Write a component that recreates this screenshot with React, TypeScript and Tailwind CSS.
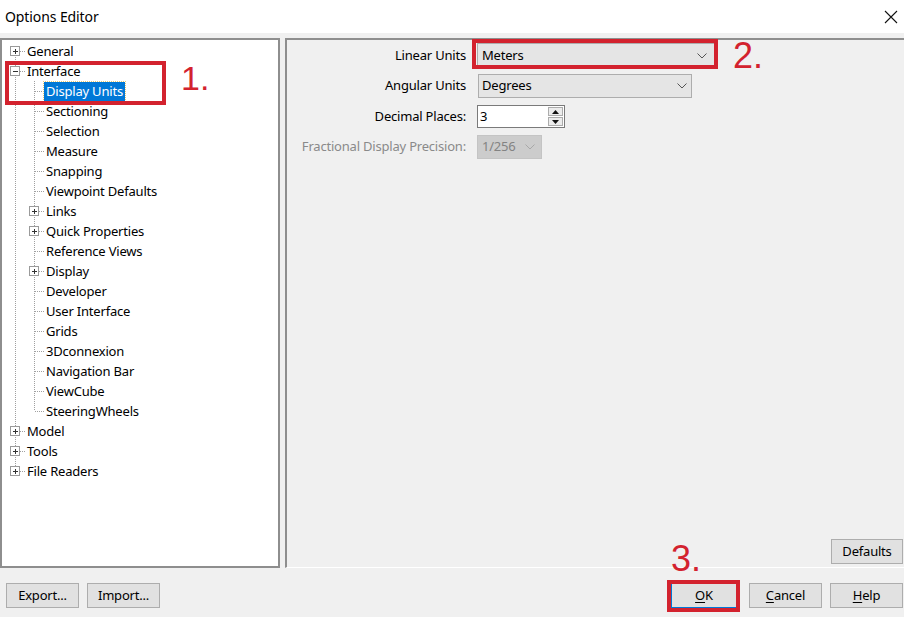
import React from "react";

type Item = { label: string; level: 0 | 1; expander?: "plus" | "minus"; first?: boolean; last?: boolean; lastChild?: boolean; selected?: boolean };

const items: Item[] = [
  { label: "General", level: 0, expander: "plus", first: true },
  { label: "Interface", level: 0, expander: "minus" },
  { label: "Display Units", level: 1, selected: true },
  { label: "Sectioning", level: 1 },
  { label: "Selection", level: 1 },
  { label: "Measure", level: 1 },
  { label: "Snapping", level: 1 },
  { label: "Viewpoint Defaults", level: 1 },
  { label: "Links", level: 1, expander: "plus" },
  { label: "Quick Properties", level: 1, expander: "plus" },
  { label: "Reference Views", level: 1 },
  { label: "Display", level: 1, expander: "plus" },
  { label: "Developer", level: 1 },
  { label: "User Interface", level: 1 },
  { label: "Grids", level: 1 },
  { label: "3Dconnexion", level: 1 },
  { label: "Navigation Bar", level: 1 },
  { label: "ViewCube", level: 1 },
  { label: "SteeringWheels", level: 1, lastChild: true },
  { label: "Model", level: 0, expander: "plus" },
  { label: "Tools", level: 0, expander: "plus" },
  { label: "File Readers", level: 0, expander: "plus", last: true },
];

const DOT = "#a0a0a0";

function Box({ cx, kind }: { cx: number; kind: "plus" | "minus" }) {
  return (
    <g>
      <rect x={cx - 4.5} y={5.5} width={9} height={9} fill="#fff" stroke="#9a9a9a" />
      <line x1={cx - 2} y1={10} x2={cx + 3} y2={10} stroke="#333" strokeWidth={1} />
      {kind === "plus" && <line x1={cx + 0.5} y1={7.5} x2={cx + 0.5} y2={12.5} stroke="#333" strokeWidth={1} />}
    </g>
  );
}

function Gutter({ it }: { it: Item }) {
  const w = it.level === 0 ? 23 : 42;
  const x0 = 13.5;
  const x1 = 32.5;
  return (
    <svg width={w} height={20} className="shrink-0" shapeRendering="crispEdges">
      <line x1={x0} x2={x0} y1={it.first ? 10 : 0} y2={it.last ? 10 : 20} stroke={DOT} strokeDasharray="1 1" />
      {it.level === 0 && (
        <>
          <line x1={18} x2={23} y1={10.5} y2={10.5} stroke={DOT} strokeDasharray="1 1" />
          {it.expander && <Box cx={13} kind={it.expander} />}
        </>
      )}
      {it.level === 1 && (
        <>
          <line x1={x1} x2={x1} y1={0} y2={it.lastChild ? 10 : 20} stroke={DOT} strokeDasharray="1 1" />
          <line x1={it.expander ? 37 : 33} x2={42} y1={10.5} y2={10.5} stroke={DOT} strokeDasharray="1 1" />
          {it.expander && <Box cx={32} kind={it.expander} />}
        </>
      )}
    </svg>
  );
}

function Chevron({ color = "#555" }: { color?: string }) {
  return (
    <svg width="10" height="6" viewBox="0 0 10 6" className="shrink-0">
      <path d="M0.5 0.5 L5 5 L9.5 0.5" fill="none" stroke={color} strokeWidth="1" />
    </svg>
  );
}

function Btn({ children, w = "w-[73px]", border = "border-[#adadad]", className = "" }: { children: React.ReactNode; w?: string; border?: string; className?: string }) {
  return (
    <div
      className={`h-[25px] ${w} flex items-center justify-center bg-[#e1e1e1] border ${border} text-[13px] tracking-[-0.2px] text-black ${className}`}
    >
      {children}
    </div>
  );
}

const T = "text-[13px] tracking-[-0.2px]";

export default function App() {
  return (
    <div
      className="relative w-[904px] h-[617px] flex flex-col bg-[#f0f0f0] overflow-hidden text-black"
      style={{ fontFamily: '"Noto Sans", "Open Sans", sans-serif' }}
    >
      {/* Title bar */}
      <div className="h-[33px] bg-white flex items-center justify-between pl-[5px] pr-[6px] shrink-0">
        <span className="text-[14px] tracking-[-0.1px] leading-none">Options Editor</span>
        <svg width="14" height="14" viewBox="0 0 14 14">
          <path d="M1 1 L13 13 M13 1 L1 13" stroke="#111" strokeWidth="1.1" />
        </svg>
      </div>

      {/* Main area */}
      <div className="flex pt-[5px] h-[535px] shrink-0">
        {/* Tree */}
        <div className="w-[280px] h-[530px] bg-white border-2 border-[#8e8e8e] pt-[1px] shrink-0 overflow-hidden">
          {items.map((it) => (
            <div key={it.label} className="h-[20px] flex items-center">
              <Gutter it={it} />
              <span
                className={`${T} leading-[19px] h-[19px] px-[2px] whitespace-nowrap ${
                  it.selected ? "bg-[#0078d7] text-white outline outline-1 outline-dotted outline-[#e8c872]" : ""
                }`}
              >
                {it.label}
              </span>
            </div>
          ))}
        </div>

        {/* Splitter */}
        <div className="w-[5px] shrink-0" />

        {/* Right panel */}
        <div className="flex-1 h-[530px] border-l-2 border-t-2 border-[#8e8e8e] border-b border-b-white flex flex-col">
          <div className="flex flex-col pt-[3px]">
            <div className="flex items-center h-[25px]">
              <span className={`w-[179px] text-right ${T}`}>Linear Units</span>
              <div className={`ml-[11px] w-[238px] h-[25px] bg-[#e5e5e5] border border-[#adadad] flex items-center justify-between pl-[4px] pr-[7px] ${T}`}>
                <span>Meters</span>
                <Chevron />
              </div>
            </div>
            <div className="flex items-center h-[24px] mt-[6px]">
              <span className={`w-[179px] text-right ${T}`}>Angular Units</span>
              <div className={`ml-[12px] w-[214px] h-[24px] bg-[#e5e5e5] border border-[#adadad] flex items-center justify-between pl-[3px] pr-[4px] ${T}`}>
                <span>Degrees</span>
                <Chevron />
              </div>
            </div>
            <div className="flex items-center h-[23px] mt-[7px]">
              <span className={`w-[179px] text-right ${T}`}>Decimal Places:</span>
              <div className={`ml-[11px] w-[88px] h-[23px] bg-white border border-[#7a7a7a] flex items-center justify-between pl-[2px] pr-[1px] ${T}`}>
                <span>3</span>
                <div className="flex flex-col w-[15px] h-[19px] gap-[1px]">
                  <div className="flex-1 bg-[#ececec] border border-[#acacac] flex items-center justify-center">
                    <svg width="7" height="4" viewBox="0 0 7 4"><path d="M0 4 L3.5 0 L7 4 Z" fill="#111" /></svg>
                  </div>
                  <div className="flex-1 bg-[#ececec] border border-[#acacac] flex items-center justify-center">
                    <svg width="7" height="4" viewBox="0 0 7 4"><path d="M0 0 L3.5 4 L7 0 Z" fill="#111" /></svg>
                  </div>
                </div>
              </div>
            </div>
            <div className="flex items-center h-[24px] mt-[7px]">
              <span className={`w-[179px] text-right ${T} text-[#8a8a8a]`}>Fractional Display Precision:</span>
              <div className={`ml-[11px] w-[65px] h-[24px] bg-[#cccccc] border border-[#c4c4c4] flex items-center justify-between pl-[4px] pr-[6px] ${T} text-[#838383]`}>
                <span>1/256</span>
                <Chevron color="#a8a8a8" />
              </div>
            </div>
          </div>
          <div className="flex-1" />
          <div className="flex justify-end pb-[3px] pr-[1px]">
            <Btn w="w-[72px]">Defaults</Btn>
          </div>
        </div>
      </div>

      {/* Bottom bar */}
      <div className="flex-1 flex items-start pl-[6px] pr-[1px] pt-[15px]">
        <Btn>Export...</Btn>
        <Btn className="ml-[8px]">Import...</Btn>
        <div className="flex-1" />
        <Btn w="w-[66px]" border="border-[#0078d7]" className="mr-[12px]">
          <span className="underline underline-offset-2">O</span>K
        </Btn>
        <Btn className="mr-[8px]">
          <span className="underline underline-offset-2">C</span>ancel
        </Btn>
        <Btn>
          <span className="underline underline-offset-2">H</span>elp
        </Btn>
      </div>

      {/* Annotations */}
      <div className="absolute left-[5px] top-[61px] w-[161px] h-[44px] border-[4px] border-[#d3222e] pointer-events-none" />
      <div className="absolute left-[181px] top-[61px] text-[34px] leading-none text-[#d3222e]" style={{ fontFamily: '"Liberation Sans", Arial, sans-serif' }}>1.</div>
      <div className="absolute left-[472px] top-[39px] w-[246px] h-[30px] border-[4px] border-[#d3222e] pointer-events-none" />
      <div className="absolute left-[733px] top-[38px] text-[36px] leading-none text-[#d3222e]" style={{ fontFamily: '"Liberation Sans", Arial, sans-serif' }}>2.</div>
      <div className="absolute left-[671px] top-[541px] text-[36px] leading-none text-[#d3222e]" style={{ fontFamily: '"Liberation Sans", Arial, sans-serif' }}>3.</div>
      <div className="absolute left-[667px] top-[580px] w-[73px] h-[32px] border-[4px] border-[#d3222e] pointer-events-none" />
    </div>
  );
}
